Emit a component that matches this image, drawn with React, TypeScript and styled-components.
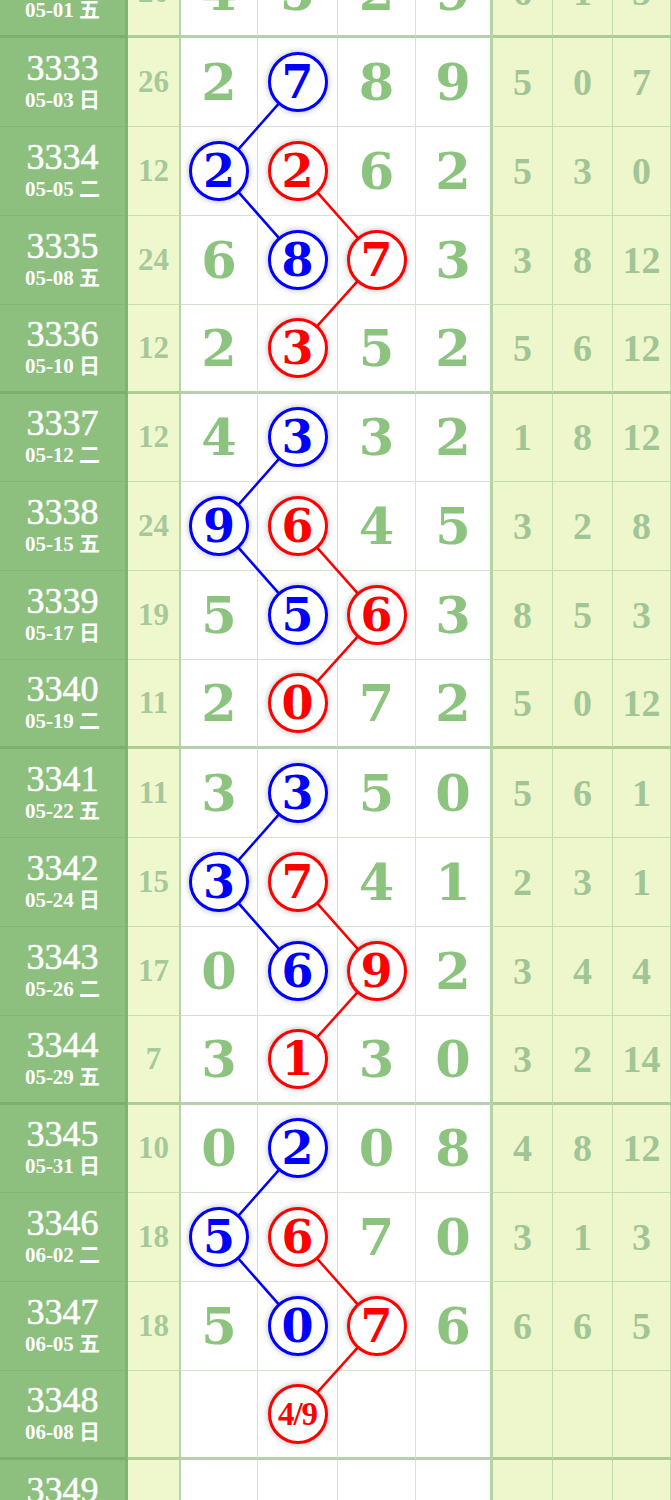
import React from 'react';
import styled, { createGlobalStyle } from 'styled-components';

const ROW_H = 88.875;
const COLS = '128px 53px 77px 80px 78px 77px 60px 60px 58px';
const DIGIT_X = [219.5, 298, 377, 454.5];

const GlobalStyle = createGlobalStyle`
	html, body {
		margin: 0;
		padding: 0;
		overflow: hidden;
		background: #fff;
	}
`;

type Mark = { col: number; color: 'blue' | 'red'; text?: string };
type Draw = {
	issue: string;
	date: string;
	sum: string;
	digits: (number | null)[];
	marks: Mark[];
	miss: string[];
};

const B = (col: number): Mark => ({ col, color: 'blue' });
const R = (col: number, text?: string): Mark => ({ col, color: 'red', text });

const draws: Draw[] = [
	{ issue: '3332', date: '05-01 五', sum: '20', digits: [4, 5, 2, 9], marks: [], miss: ['6', '1', '5'] },
	{ issue: '3333', date: '05-03 日', sum: '26', digits: [2, 7, 8, 9], marks: [B(1)], miss: ['5', '0', '7'] },
	{ issue: '3334', date: '05-05 二', sum: '12', digits: [2, 2, 6, 2], marks: [B(0), R(1)], miss: ['5', '3', '0'] },
	{ issue: '3335', date: '05-08 五', sum: '24', digits: [6, 8, 7, 3], marks: [B(1), R(2)], miss: ['3', '8', '12'] },
	{ issue: '3336', date: '05-10 日', sum: '12', digits: [2, 3, 5, 2], marks: [R(1)], miss: ['5', '6', '12'] },
	{ issue: '3337', date: '05-12 二', sum: '12', digits: [4, 3, 3, 2], marks: [B(1)], miss: ['1', '8', '12'] },
	{ issue: '3338', date: '05-15 五', sum: '24', digits: [9, 6, 4, 5], marks: [B(0), R(1)], miss: ['3', '2', '8'] },
	{ issue: '3339', date: '05-17 日', sum: '19', digits: [5, 5, 6, 3], marks: [B(1), R(2)], miss: ['8', '5', '3'] },
	{ issue: '3340', date: '05-19 二', sum: '11', digits: [2, 0, 7, 2], marks: [R(1)], miss: ['5', '0', '12'] },
	{ issue: '3341', date: '05-22 五', sum: '11', digits: [3, 3, 5, 0], marks: [B(1)], miss: ['5', '6', '1'] },
	{ issue: '3342', date: '05-24 日', sum: '15', digits: [3, 7, 4, 1], marks: [B(0), R(1)], miss: ['2', '3', '1'] },
	{ issue: '3343', date: '05-26 二', sum: '17', digits: [0, 6, 9, 2], marks: [B(1), R(2)], miss: ['3', '4', '4'] },
	{ issue: '3344', date: '05-29 五', sum: '7', digits: [3, 1, 3, 0], marks: [R(1)], miss: ['3', '2', '14'] },
	{ issue: '3345', date: '05-31 日', sum: '10', digits: [0, 2, 0, 8], marks: [B(1)], miss: ['4', '8', '12'] },
	{ issue: '3346', date: '06-02 二', sum: '18', digits: [5, 6, 7, 0], marks: [B(0), R(1)], miss: ['3', '1', '3'] },
	{ issue: '3347', date: '06-05 五', sum: '18', digits: [5, 0, 7, 6], marks: [B(1), R(2)], miss: ['6', '6', '5'] },
	{ issue: '3348', date: '06-08 日', sum: '', digits: [null, null, null, null], marks: [R(1, '4/9')], miss: ['', '', ''] },
	{ issue: '3349', date: '06-10 二', sum: '', digits: [null, null, null, null], marks: [], miss: ['', '', ''] },
];

const isGroupEnd = (i: number) => i % 4 === 0;
const borderOf = (i: number) => (isGroupEnd(i) ? 3 : 1);

const Page = styled.div`
	height: 1500px;
	overflow: hidden;
	background: #fff;
	font-family: 'Liberation Serif', 'Noto Sans CJK SC', serif;
`;

const Board = styled.div`
	position: relative;
	margin-top: -50.875px;
`;

const Row = styled.div`
	display: grid;
	grid-template-columns: ${COLS};
	height: ${ROW_H}px;
`;

const Cell = styled.div<{ $end: boolean }>`
	box-sizing: border-box;
	display: flex;
	align-items: center;
	justify-content: center;
	border-bottom: ${(p) => (p.$end ? '3px solid rgba(110, 160, 90, 0.5)' : '1px solid rgba(110, 160, 90, 0.3)')};
`;

const IssueCell = styled(Cell)`
	flex-direction: column;
	gap: 6px;
	background: #8dc07e;
	border-right: 3px solid #80b571;
	color: #fff;
`;

const IssueNo = styled.div`
	font-size: 36px;
	line-height: 30px;
	-webkit-text-stroke: 0.5px #fff;
`;

const IssueDate = styled.div`
	font-size: 21px;
	font-weight: bold;
	line-height: 22px;
`;

const SumCell = styled(Cell)`
	background: #eff8cd;
	border-right: 2px solid #b8d2a8;
	color: #a6c89b;
	font-size: 31px;
	font-weight: bold;
`;

const DigitCell = styled(Cell)<{ $last?: boolean }>`
	background: #fff;
	border-right: ${(p) => (p.$last ? '3px solid #b7d3a3' : '1px solid #d3e5cb')};
	color: #8cc47f;
	font-family: 'DejaVu Serif', serif;
	font-size: 51px;
	font-weight: bold;
`;

const MissCell = styled(Cell)`
	background: #eef7cc;
	border-right: 1px solid #c2dbae;
	color: #a2c596;
	font-size: 38px;
	font-weight: bold;
`;

const Ball = styled.div<{ $color: string; $small?: boolean }>`
	position: relative;
	z-index: 2;
	box-sizing: border-box;
	width: 60px;
	height: 60px;
	border-radius: 50%;
	border: 3px solid ${(p) => p.$color};
	background: #fff;
	box-shadow: 0 0 6px rgba(0, 0, 0, 0.3);
	color: ${(p) => p.$color};
	display: flex;
	align-items: center;
	justify-content: center;
	font-family: ${(p) => (p.$small ? "'Liberation Serif', serif" : "'DejaVu Serif', serif")};
	font-size: ${(p) => (p.$small ? '33px' : '46px')};
	font-weight: bold;
	letter-spacing: ${(p) => (p.$small ? '-1px' : '0')};
`;

const Links = styled.svg`
	position: absolute;
	top: 0;
	left: 0;
	z-index: 1;
	pointer-events: none;
`;

const COLOR = { blue: '#0000ff', red: '#ff0000' };

const centerY = (i: number) => i * ROW_H + (ROW_H - borderOf(i)) / 2;

const buildLinks = () => {
	const segs: { x1: number; y1: number; x2: number; y2: number; c: string }[] = [];
	(['blue', 'red'] as const).forEach((color) => {
		let prev: { x: number; y: number; g: number } | null = null;
		draws.forEach((d, i) => {
			const m = d.marks.find((k) => k.color === color);
			if (!m) return;
			const cur = { x: DIGIT_X[m.col], y: centerY(i), g: Math.floor((i - 1) / 4) };
			if (prev && prev.g === cur.g) segs.push({ x1: prev.x, y1: prev.y, x2: cur.x, y2: cur.y, c: COLOR[color] });
			prev = cur;
		});
	});
	return segs;
};

const App = () => {
	const segs = buildLinks();
	const height = draws.length * ROW_H;
	return (
		<Page>
			<GlobalStyle />
			<Board>
				{draws.map((d, i) => {
					const end = isGroupEnd(i);
					return (
						<Row key={d.issue}>
							<IssueCell $end={end}>
								<IssueNo>{d.issue}</IssueNo>
								<IssueDate>{d.date}</IssueDate>
							</IssueCell>
							<SumCell $end={end}>{d.sum}</SumCell>
							{d.digits.map((n, c) => {
								const mark = d.marks.find((m) => m.col === c);
								return (
									<DigitCell key={c} $end={end} $last={c === 3}>
										{mark ? (
											<Ball $color={COLOR[mark.color]} $small={!!mark.text}>
												{mark.text ?? n}
											</Ball>
										) : (
											n
										)}
									</DigitCell>
								);
							})}
							{d.miss.map((v, c) => (
								<MissCell key={c} $end={end}>
									{v}
								</MissCell>
							))}
						</Row>
					);
				})}
				<Links width={671} height={height}>
					{segs.map((s, k) => (
						<line key={k} x1={s.x1} y1={s.y1} x2={s.x2} y2={s.y2} stroke={s.c} strokeWidth={2.5} />
					))}
				</Links>
			</Board>
		</Page>
	);
};

export default App;
